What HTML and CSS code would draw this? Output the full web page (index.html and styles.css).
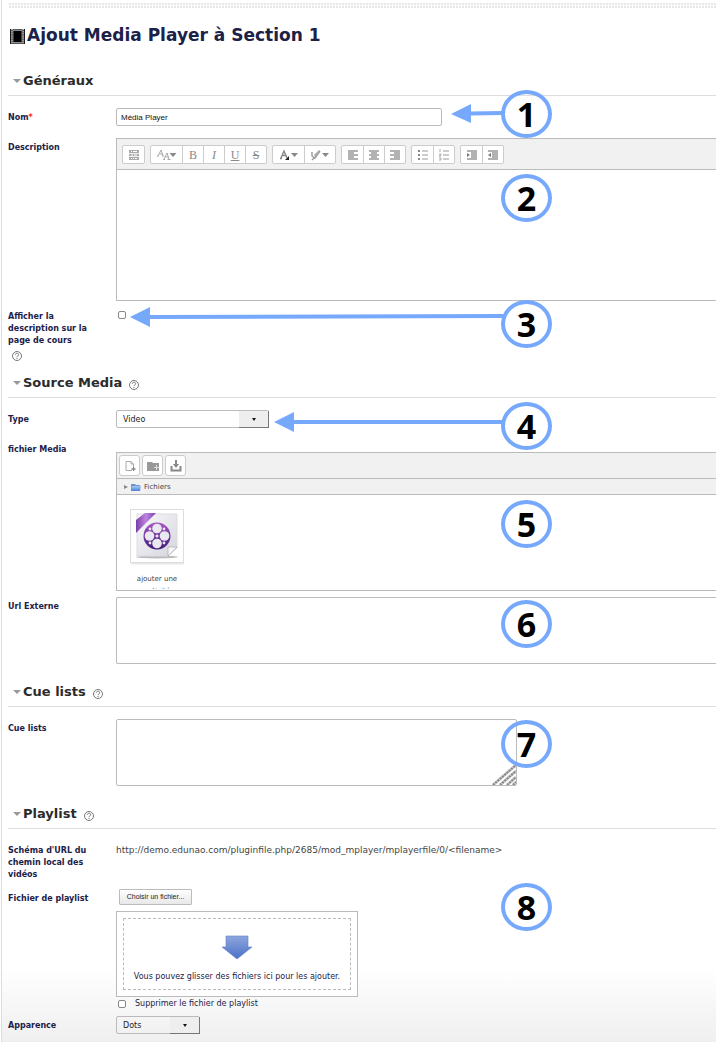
FILE: index.html
```html
<!DOCTYPE html>
<html lang="fr">
<head>
<meta charset="utf-8">
<title>Ajout Media Player à Section 1</title>
<link rel="stylesheet" href="styles.css">
</head>
<body>
<main class="page">
  <div class="strip"></div>
  <h1 class="title">
    <svg class="film" viewBox="0 0 16 16" aria-hidden="true"><rect width="16" height="16" fill="#555"/><path d="M2 0v16M14 0v16" stroke="#bbb" stroke-width="2" stroke-dasharray="1 1"/><rect x="4" y="2" width="8" height="12" fill="#000"/><path d="M3 1.500h10M3 14.500h10" stroke="#999"/><path d="M.5 0v16M15.500 0v16" stroke="#111"/></svg>
    Ajout Media Player à Section 1
  </h1>

  <form>
    <section>
      <h2 class="legend"><button type="button" class="toggle">Généraux</button></h2>
      <div class="row gap-l">
        <label class="label" for="nom">Nom<span class="req">*</span></label>
        <input class="text" id="nom" type="text" value="Média Player">
      </div>
      <div class="row gap-s">
        <label class="label" for="desc">Description</label>
        <div class="editor">
          <div class="tools">
            <div class="group">
              <button type="button" aria-label="Afficher plus"><svg viewBox="0 0 12 12"><path fill="#aaa" d="M1 1h10v10H1z"/><path d="M1 4.500h10M1 7.500h10" stroke="#eee"/><path d="M3 2.500h1m1 0h4M3 6h2m1 0h3M3 9.500h1m1 0h1m1 0h2" stroke="#fff"/></svg></button>
            </div>
            <div class="group">
              <button type="button" class="wide" aria-label="Style"><svg class="w20" viewBox="0 0 20 12"><path d="M1 7l3-6 2 6M2.500 5h3M0 7h2M5 7h2M7 10l3-6 2 6M8.500 8h3M6 10.500h2M10.500 10.500h3" fill="none" stroke="#aaa"/><path d="M12.500 4h7L16 8z" fill="#888"/></svg></button>
              <button type="button" class="glyph">B</button>
              <button type="button" class="glyph"><i>I</i></button>
              <button type="button" class="glyph"><u>U</u></button>
              <button type="button" class="glyph"><s>S</s></button>
            </div>
            <div class="group">
              <button type="button" class="wide" aria-label="Couleur du texte"><svg class="w20" viewBox="0 0 20 12"><path d="M2 9l3-7 3 7M3 6.500h4M1 9.500h2" fill="none" stroke="#888" stroke-width="1.400"/><path d="M6 11h4V7z" fill="#222"/><path d="M12 4h7l-3.500 4z" fill="#888"/></svg></button>
              <button type="button" class="wide" aria-label="Surlignage"><svg class="w20" viewBox="0 0 20 12"><path d="M2 3v4l3 2 5-7M2 11l2-2" fill="none" stroke="#999" stroke-width="1.400"/><path d="M4 6l5-5 1 1-5 6z" fill="#aaa"/><path d="M12 4h7l-3.500 4z" fill="#888"/></svg></button>
            </div>
            <div class="group">
              <button type="button" aria-label="Aligner à gauche"><svg viewBox="0 0 12 12"><path d="M1 2h10M1 4h6M1 6h10M1 8h6M1 10h10" stroke="#999" stroke-width="1.300"/></svg></button>
              <button type="button" aria-label="Centrer"><svg viewBox="0 0 12 12"><path d="M1 2h10M3 4h6M1 6h10M3 8h6M1 10h10" stroke="#999" stroke-width="1.300"/></svg></button>
              <button type="button" aria-label="Aligner à droite"><svg viewBox="0 0 12 12"><path d="M1 2h10M5 4h6M1 6h10M5 8h6M1 10h10" stroke="#999" stroke-width="1.300"/></svg></button>
            </div>
            <div class="group">
              <button type="button" aria-label="Liste à puces"><svg viewBox="0 0 12 12"><path d="M1 2h2M1 6h2M1 10h2" stroke="#888" stroke-width="2"/><path d="M5 2h6M5 6h6M5 10h6" stroke="#999"/></svg></button>
              <button type="button" aria-label="Liste numérotée"><svg viewBox="0 0 12 12"><path d="M2 0v3M1 5h2v1L1 7h2M1 9h2v2H1" fill="none" stroke="#aaa"/><path d="M5 2h6M5 6h6M5 10h6" stroke="#999"/></svg></button>
            </div>
            <div class="group">
              <button type="button" aria-label="Augmenter le retrait"><svg viewBox="0 0 12 12"><path d="M1 2h10M5 4h6M5 6h6M5 8h6M1 10h10" stroke="#999" stroke-width="1.300"/><path d="M1 4l3 2-3 2z" fill="#777"/></svg></button>
              <button type="button" aria-label="Réduire le retrait"><svg viewBox="0 0 12 12"><path d="M1 2h10M5 4h6M5 6h6M5 8h6M1 10h10" stroke="#999" stroke-width="1.300"/><path d="M4 4L1 6l3 2z" fill="#777"/></svg></button>
            </div>
          </div>
          <textarea class="content" id="desc"></textarea>
        </div>
      </div>
      <div class="row">
        <div>
          <label class="label" for="show">Afficher la description sur la page de cours</label>
          <button type="button" class="help below" aria-label="Aide"><svg viewBox="0 0 12 12"><circle cx="6" cy="6" r="4.500" fill="none" stroke="#777"/><path d="M4.300 4.800C4.300 2.800 7.700 2.800 7.700 4.700 7.700 6 6 5.800 6 7.100M6 7.900v1.100" fill="none" stroke="#777"/></svg></button>
        </div>
        <input class="check" id="show" type="checkbox">
      </div>
    </section>

    <section>
      <h2 class="legend near"><button type="button" class="toggle">Source Media</button><button type="button" class="help" aria-label="Aide"><svg viewBox="0 0 12 12"><circle cx="6" cy="6" r="4.500" fill="none" stroke="#777"/><path d="M4.300 4.800C4.300 2.800 7.700 2.800 7.700 4.700 7.700 6 6 5.800 6 7.100M6 7.900v1.100" fill="none" stroke="#777"/></svg></button></h2>
      <div class="row gap-l">
        <label class="label" for="type">Type</label>
        <div class="pick video"><select id="type"><option>Video</option></select><span class="drop"></span></div>
      </div>
      <div class="row gap-s">
        <span class="label">fichier Media</span>
        <div class="manager">
          <div class="actions">
            <button type="button" aria-label="Ajouter"><svg viewBox="0 0 12 12"><path d="M8 10.500H2V1.500h5L9.500 4v3M7 1.500V4h2.500" fill="none" stroke="#aaa"/><path d="M9.500 7v4M7.500 9h4" stroke="#888" stroke-width="1.300"/></svg></button>
            <button type="button" aria-label="Créer un dossier"><svg viewBox="0 0 12 12"><path d="M0 2h5l1 1h6v8H0z" fill="#999"/><path d="M9.500 5v5M7 7.500h5" stroke="#ddd"/></svg></button>
            <button type="button" aria-label="Télécharger"><svg viewBox="0 0 12 12"><path d="M1.500 6v4.500h9V6" fill="none" stroke="#888" stroke-width="2"/><path d="M6 0v5" stroke="#888" stroke-width="2"/><path d="M3 4h6L6 8z" fill="#888"/></svg></button>
          </div>
          <div class="path">
            <svg class="tri" viewBox="0 0 4 6"><path d="M0 1l4 2-4 2z" fill="#888"/></svg>
            <svg class="folder" viewBox="0 0 10 8"><defs><linearGradient id="fo" x2="0" y2="1"><stop stop-color="#a9c9f5"/><stop offset="1" stop-color="#4a7fd6"/></linearGradient></defs><path d="M0 1h4l1 1h4v6H0z" fill="#6d94d2"/><path d="M1 3h9L9 8H0z" fill="url(#fo)"/></svg>
            <a href="#fichiers">Fichiers</a>
          </div>
          <div class="files">
            <a class="file" href="#fichier">
              <span class="thumb"><svg viewBox="0 0 48 48"><defs><linearGradient id="pg" x2="1" y2="1"><stop stop-color="#f8f8fb"/><stop offset="1" stop-color="#d5d5de"/></linearGradient><linearGradient id="rl" x2="0" y2="1"><stop stop-color="#a857c4"/><stop offset="1" stop-color="#3f1a78"/></linearGradient><linearGradient id="rb" x2="1" y2="0"><stop stop-color="#7a3fa6"/><stop offset=".5" stop-color="#bd85e0"/><stop offset="1" stop-color="#7c3ea8"/></linearGradient></defs><ellipse cx="24" cy="45" rx="21" ry="1.500" fill="#bbb"/><path d="M4 2h40v34l-9 8H4z" fill="url(#pg)" stroke="#dcdce3"/><path d="M35 44V35h9z" fill="#f6f6fa" stroke="#aaa" stroke-width=".7"/><path d="M3 8V21L23 1H12z" fill="url(#rb)"/><circle cx="24" cy="24" r="13.500" fill="url(#rl)"/><g fill="#e9e7ef"><circle cx="24" cy="16.500" r="4.800"/><circle cx="24" cy="31.500" r="4.800"/><circle cx="16.500" cy="24" r="4.800"/><circle cx="31.500" cy="24" r="4.800"/><circle cx="24" cy="24" r="1.500"/><circle cx="17" cy="17" r="1.400"/><circle cx="31" cy="17" r="1.400"/><circle cx="17" cy="31" r="1.400"/><circle cx="31" cy="31" r="1.400"/></g></svg></span>
              <span class="name">ajouter une activité</span>
            </a>
          </div>
        </div>
      </div>
      <div class="row">
        <label class="label" for="url">Url Externe</label>
        <textarea class="area bleed" id="url"></textarea>
      </div>
    </section>

    <section>
      <h2 class="legend"><button type="button" class="toggle">Cue lists</button><button type="button" class="help" aria-label="Aide"><svg viewBox="0 0 12 12"><circle cx="6" cy="6" r="4.500" fill="none" stroke="#777"/><path d="M4.300 4.800C4.300 2.800 7.700 2.800 7.700 4.700 7.700 6 6 5.800 6 7.100M6 7.900v1.100" fill="none" stroke="#777"/></svg></button></h2>
      <div class="row">
        <label class="label" for="cue">Cue lists</label>
        <div class="sized">
          <textarea class="area" id="cue"></textarea>
          <svg class="grip" viewBox="0 0 24 20" aria-hidden="true"><path d="M1 20L24 0M8 20L24 6M15 20l9-8M21 20l3-3" stroke="#ccc" stroke-width="3"/><path d="M1 20L24 0M8 20L24 6M15 20l9-8M21 20l3-3" stroke="#888" stroke-width="2" stroke-dasharray="2 1"/></svg>
        </div>
      </div>
    </section>

    <section>
      <h2 class="legend"><button type="button" class="toggle">Playlist</button><button type="button" class="help" aria-label="Aide"><svg viewBox="0 0 12 12"><circle cx="6" cy="6" r="4.500" fill="none" stroke="#777"/><path d="M4.300 4.800C4.300 2.800 7.700 2.800 7.700 4.700 7.700 6 6 5.800 6 7.100M6 7.900v1.100" fill="none" stroke="#777"/></svg></button></h2>
      <div class="row gap-m">
        <span class="label">Schéma d'URL du chemin local des vidéos</span>
        <span class="static">http://demo.edunao.com/pluginfile.php/2685/mod_mplayer/mplayerfile/0/&lt;filename&gt;</span>
      </div>
      <div class="row">
        <span class="label">Fichier de playlist</span>
        <div class="upload">
          <button type="button" class="choose">Choisir un fichier...</button>
          <div class="dropbox"><div class="target">
            <svg class="down" viewBox="0 0 30 26" aria-hidden="true"><defs><linearGradient id="dn" x2="0" y2="1"><stop stop-color="#8fa6de"/><stop offset="1" stop-color="#4a70c8"/></linearGradient></defs><path d="M4 1h22v11h4L15 24 0 12h4z" fill="url(#dn)" stroke="#5f7fc8" stroke-width=".6"/></svg>
            <span>Vous pouvez glisser des fichiers ici pour les ajouter.</span>
          </div></div>
          <label class="remove"><input class="check" type="checkbox">Supprimer le fichier de playlist</label>
        </div>
      </div>
      <div class="row">
        <label class="label" for="look">Apparence</label>
        <div class="pick dots"><select id="look"><option>Dots</option></select><span class="drop"></span></div>
      </div>
    </section>
  </form>

  <div class="notes">
    <svg class="arrows" viewBox="0 0 716 450" aria-hidden="true"><path d="M470 113.500L502 113M149 317L503 316M292 422H503" stroke="#76a9fc" stroke-width="4"/><path d="M451 114l20-10v19zM130 317l20-10v20zM274 422l20-10v20z" fill="#76a9fc"/></svg>
    <span class="pin p1">1</span>
    <span class="pin p2">2</span>
    <span class="pin p3">3</span>
    <span class="pin p4">4</span>
    <span class="pin p5">5</span>
    <span class="pin p6">6</span>
    <span class="pin p7">7</span>
    <span class="pin p8">8</span>
  </div>
</main>
</body>
</html>
```
FILE: styles.css
```css
* { box-sizing: border-box; }
body { margin: 0; background: #fff; font: 8px/12px "DejaVu Sans", Verdana, sans-serif; color: #222; }
button, input, select, textarea { font: inherit; color: inherit; margin: 0; padding: 0; }
svg { display: block; }
.page { position: relative; margin-left: 1px; padding: 2px 0 8px 6px; border-left: 1px solid #ddd; background: linear-gradient(to top, #eee, #fff 80px); overflow: hidden; }
.strip { height: 7px; background-color: #e6e6e6; background-image: linear-gradient(#fff 1px, transparent 1px), linear-gradient(to right, #fff 1px, transparent 1px); background-size: 3px 3px; }
.title { display: flex; align-items: center; gap: 2px; margin: 14px 0 21px; padding-left: 2px; font-size: 17px; line-height: 24px; color: #1c2148; }
.film { width: 15px; height: 15px; margin-top: 2px; }

.legend { display: flex; align-items: center; gap: 6px; margin: 15px 0 12px; padding: 1px 0 2px 5px; border-bottom: 1px solid #ddd; font-size: 13px; line-height: 24px; color: #2b2b2b; }
.legend.near { margin-top: 8px; }
.toggle { display: flex; align-items: center; gap: 2px; border: 0; background: none; line-height: 24px; }
.toggle::before { content: ""; border: solid transparent; border-width: 4px 4px 0; border-top-color: #999; }
.help { width: 12px; height: 12px; border: 0; background: none; }
.legend .help { margin-top: 4px; }
.help.below { display: block; margin: 3px 0 0 3px; }

.row { display: grid; grid-template-columns: 108px minmax(0, 1fr); align-items: start; margin-bottom: 6px; }
.gap-l { margin-bottom: 12px; }
.gap-m { margin-bottom: 8px; }
.label { display: block; max-width: 84px; padding-top: 4px; font-weight: bold; color: #1c2148; }
.req { color: #f22; }
.text { width: 326px; max-width: 100%; height: 18px; padding: 0 4px; border: 1px solid #bbb; border-radius: 2px; background: #fff; font-family: "Liberation Sans", Arial, sans-serif; color: #111; }
.check { appearance: none; width: 8px; height: 8px; border: 1px solid #888; border-radius: 2px; background: #fff; }
.row > .check { margin: 4px 0 0 2px; }

.editor { border: 1px solid #bbb; border-right: 0; }
.tools { display: flex; gap: 5px; padding: 6px 5px 5px; border-bottom: 1px solid #bbb; background: #f1f1f1; }
.group { display: flex; border: 1px solid #ccc; border-radius: 2px; background: #fff; }
.group button { display: grid; place-items: center; width: 21px; height: 17px; border: 0; background: none; }
.group button + button { width: 21px; border-left: 1px solid #ccc; }
.group .wide, .group button + .wide { width: 31px; }
.group svg { width: 12px; height: 12px; }
.group .w20 { width: 20px; }
.group .glyph { font: 12px/16px "Liberation Serif", "Times New Roman", serif; color: #888; }
.content { display: block; width: 100%; height: 130px; border: 0; resize: none; outline: 0; }

.pick { position: relative; height: 18px; max-width: 100%; }
.pick select { appearance: none; width: 100%; height: 18px; padding: 1px 0 0 6px; border: 1px solid #bbb; border-radius: 2px; background: none; }
.video { width: 153px; }
.dots { width: 84px; }
.drop { position: absolute; top: 1px; right: 0; bottom: 0; width: 30px; display: grid; place-items: center; background: #eee; border: solid #777; border-width: 0 1px 1px 0; pointer-events: none; }
.drop::before { content: ""; border: solid transparent; border-width: 3px 2px 0; border-top-color: #111; }

.manager { margin-top: 12px; border: 1px solid #bbb; border-right: 0; }
.actions { display: flex; gap: 2px; padding: 2px; border-bottom: 1px solid #bbb; background: #f1f1f1; }
.actions button { display: grid; place-items: center; width: 21px; height: 21px; border: 1px solid #ccc; border-radius: 3px; background: #fff; }
.actions svg { width: 12px; height: 12px; }
.path { display: flex; align-items: center; gap: 3px; height: 16px; padding: 1px 0 0 7px; border-bottom: 1px solid #bbb; background: #f1f1f1; font-size: 7px; }
.path a, .file { color: #444; text-decoration: none; }
.tri { width: 4px; height: 6px; }
.folder { width: 10px; height: 8px; }
.files { height: 95px; padding: 14px 13px 1px; overflow: hidden; }
.file { display: flex; flex-direction: column; gap: 10px; width: 54px; height: 80px; overflow: hidden; }
.thumb { flex: none; padding: 2px; border: 1px solid #ddd; box-shadow: 1px 1px 2px #ddd; }
.thumb svg { width: 48px; height: 48px; }
.name { font-size: 7px; text-align: center; }
.area { display: block; width: 100%; height: 67px; border: 1px solid #bbb; border-radius: 2px; background: #fff; resize: none; }
.bleed { border-right: 0; border-radius: 2px 0 0 2px; }
.sized { position: relative; width: 401px; max-width: 100%; }
.grip { position: absolute; right: 1px; bottom: 1px; width: 24px; height: 20px; }

.static { padding-top: 3px; color: #444; font-size: 9px; }
.choose { display: block; width: 73px; height: 16px; margin: 0 0 6px 3px; border: 1px solid #bbb; border-radius: 1px; background: linear-gradient(#fff, #e8e8e8); font: 7px/12px "Liberation Sans", Arial, sans-serif; white-space: nowrap; }
.dropbox { width: 242px; max-width: 100%; padding: 6px; border: 1px solid #bbb; background: #fff; }
.target { display: flex; flex-direction: column; align-items: center; gap: 10px; padding: 16px 0 6px; border: 1px dashed #bbb; white-space: nowrap; color: #1c2148; }
.down { width: 30px; height: 26px; }
.remove { display: flex; align-items: center; gap: 9px; padding: 1px 0 0 2px; color: #1c2148; }

.notes { position: absolute; inset: 0; pointer-events: none; }
.arrows { position: absolute; top: 0; left: -2px; width: 716px; height: 450px; }
.pin { position: absolute; left: 499px; width: 51px; height: 48px; border: 4px solid #76a9fc; border-radius: 50%; font: bold 34px/40px "Noto Sans", "Open Sans", sans-serif; text-align: center; color: #000; }
.p1 { top: 90px; }
.p2 { top: 174px; }
.p3 { top: 300px; }
.p4 { top: 402px; }
.p5 { top: 500px; }
.p6 { top: 600px; }
.p7 { top: 720px; }
.p8 { top: 883px; }
```
